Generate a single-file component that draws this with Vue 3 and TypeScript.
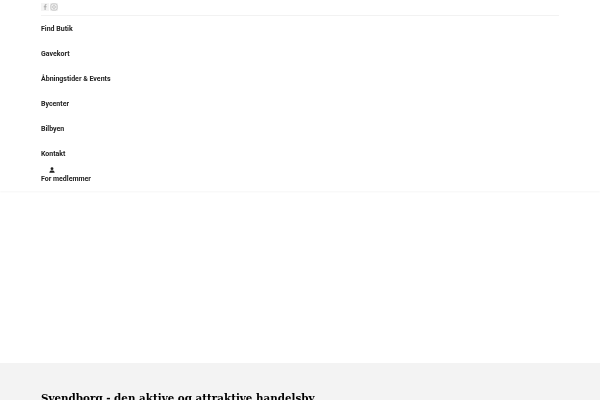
<script setup lang="ts">
const links = ['Find Butik', 'Gavekort', 'Åbningstider & Events', 'Bycenter', 'Bilbyen', 'Kontakt']
</script>

<template>
  <div class="page">
    <header class="header">
      <div class="topbar">
        <div class="socials">
          <a class="social">
            <svg viewBox="0 0 8 8" width="8" height="8">
              <path d="M4.6 7V4.300h.9l.1-1h-1v-.7c0-.3.1-.5.5-.5h.5V1.200H4.800C4 1.200 3.600 1.700 3.600 2.500v.8h-.8v1h.8V7z" fill="#aaa" />
            </svg>
          </a>
          <a class="social">
            <svg viewBox="0 0 8 8" width="8" height="8" fill="none" stroke="#b0b0b0" stroke-width=".7">
              <rect x=".9" y=".9" width="6.200" height="6.200" rx="1.500" />
              <circle cx="4" cy="4" r="1.400" />
            </svg>
          </a>
        </div>
      </div>
      <nav class="nav">
        <a v-for="link in links" :key="link" class="nav-link">{{ link }}</a>
        <a class="nav-link member">
          <svg class="member-icon" viewBox="0 0 8 8" width="6" height="6">
            <circle cx="4" cy="2.200" r="1.900" fill="#222" />
            <path d="M.5 7.500C.5 5.500 2 4.700 4 4.700s3.500.8 3.500 2.800z" fill="#222" />
          </svg>
          <span>For medlemmer</span>
        </a>
      </nav>
    </header>
    <main class="hero"></main>
    <section class="intro">
      <h2>Svendborg - den aktive og attraktive handelsby</h2>
    </section>
  </div>
</template>

<style>
html,
body {
  margin: 0;
  overflow: hidden;
  background: #fff;
}
</style>

<style scoped>
.page {
  width: 600px;
  height: 400px;
  overflow: hidden;
}

.header {
  height: 191px;
  box-sizing: border-box;
  box-shadow: 0 1px 2px rgba(0, 0, 0, 0.04);
}

.topbar {
  height: 15px;
  margin: 0 41px;
  border-bottom: 1px solid #f2f2f2;
}

.socials {
  display: flex;
  gap: 1px;
  padding-top: 3px;
}

.social {
  display: flex;
  width: 8px;
  height: 8px;
  background: #f4f4f4;
}

.nav {
  display: flex;
  flex-direction: column;
  padding: 0 41px;
  font-family: Roboto, sans-serif;
  font-size: 7px;
  font-weight: 700;
  color: #222;
  will-change: transform;
}

.nav-link {
  height: 25px;
  display: flex;
  align-items: center;
  line-height: 8px;
  white-space: nowrap;
}

.member {
  flex-direction: column;
  align-items: flex-start;
  justify-content: flex-end;
  box-sizing: border-box;
  padding-bottom: 8px;
}

.member-icon {
  margin: 0 0 2px 8px;
}

.hero {
  height: 172px;
}

.intro {
  height: 37px;
  background: #f3f3f3;
  padding: 29px 41px 0;
}

h2 {
  margin: 0;
  font-family: 'DejaVu Serif', serif;
  font-size: 10.350px;
  font-weight: 700;
  line-height: 12px;
  color: #000;
  white-space: nowrap;
  will-change: transform;
}
</style>
